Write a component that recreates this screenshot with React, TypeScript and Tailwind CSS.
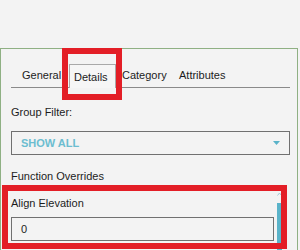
export default function App() {
  return (
    <div className="relative w-[300px] h-[250px] overflow-hidden bg-[#f3f3f3] font-['Liberation_Sans',Arial,sans-serif] text-[11px] text-[#1c1c1c]">
      {/* Properties panel */}
      <div className="mt-[48px] w-[298px] h-[210px] border border-b-0 border-[#8fb083] pt-[15px] pl-[10px] pr-[7px]">
        {/* Tabs */}
        <div className="flex h-[24px] border-b border-[#8a8a8a]">
          <div className="w-[58px] h-[23px] pl-[11px] leading-[23px]">General</div>
          <div className="w-[47px] h-[24px] -mb-px pl-[4px] leading-[24px] border border-b-0 border-[#a9a9a9] bg-[#f6f6f6]">
            Details
          </div>
          <div className="w-[63px] h-[23px] pl-[6px] leading-[23px]">Category</div>
          <div className="h-[23px] leading-[23px]">Attributes</div>
        </div>

        <div className="mt-[18px] leading-[13px]">Group Filter:</div>

        {/* Group select */}
        <div className="mt-[12px] h-[24px] flex items-center justify-between border border-[#707070] pl-[9px] pr-[9px]">
          <span className="font-bold text-[#6cbdd0]">SHOW ALL</span>
          <svg width="7" height="4" viewBox="0 0 7 4">
            <path d="M0 0 L7 0 L3.5 4 Z" fill="#5ab3c9" />
          </svg>
        </div>

        <div className="mt-[15px] leading-[13px]">Function Overrides</div>

        {/* Overrides list with scrollbar */}
        <div className="mt-[5px] flex">
          <div className="w-[263px] pt-[9px]">
            <div className="leading-[13px]">Align Elevation</div>
            <div className="mt-[7px] h-[24px] flex items-center border border-[#707070] pl-[9px]">0</div>
          </div>
          <div className="ml-[3px] w-[5px] flex flex-col items-center">
            <svg className="mt-[4px]" width="5" height="4" viewBox="0 0 5 4">
              <path d="M0.5 3.5 L2.5 1 L4.5 3.5" fill="none" stroke="#9fc9d6" strokeWidth="1" />
            </svg>
            <div className="mt-[7px] w-[5px] h-[60px] bg-[#5ab3c9]" />
          </div>
        </div>
      </div>

      {/* Annotation highlights */}
      <div className="absolute left-[62px] top-[48px] w-[60px] h-[52px] border-[6px] border-[#e31e26]" />
      <div className="absolute left-[2px] top-[185px] w-[285px] h-[64px] border-[6px] border-[#e31e26]" />
    </div>
  );
}
